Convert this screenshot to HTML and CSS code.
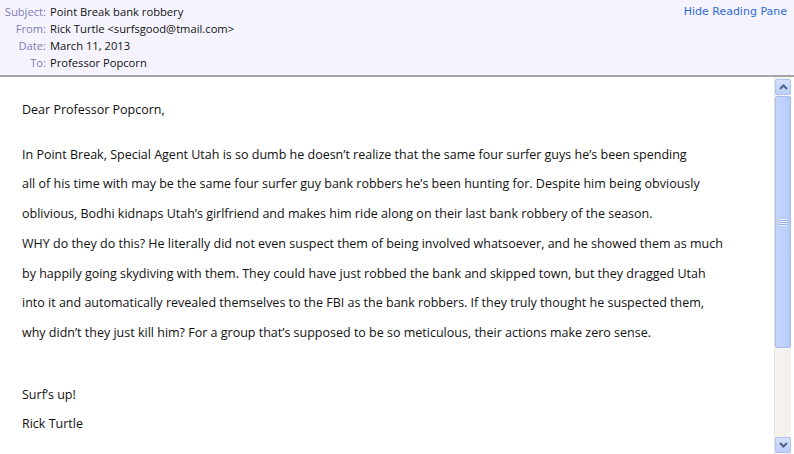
FILE: index.html
```html
<!DOCTYPE html>
<html>
<head>
<meta charset="utf-8">
<link rel="stylesheet" href="styles.css">
</head>
<body>
<div class="pane">
  <header class="head">
    <div class="fields">
      <div class="row"><span class="lbl">Subject:</span><span class="val">Point Break bank robbery</span></div>
      <div class="row"><span class="lbl">From:</span><span class="val">Rick Turtle &lt;surfsgood@tmail.com&gt;</span></div>
      <div class="row"><span class="lbl">Date:</span><span class="val">March 11, 2013</span></div>
      <div class="row"><span class="lbl">To:</span><span class="val">Professor Popcorn</span></div>
    </div>
    <a class="hide">Hide Reading Pane</a>
  </header>
  <div class="bodywrap">
    <div class="msg">
      <p class="greet">Dear Professor Popcorn,</p>
      <p class="main">
        <span class="ln">In Point Break, Special Agent Utah is so dumb he doesn’t realize that the same four surfer guys he’s been spending</span>
        <span class="ln">all of his time with may be the same four surfer guy bank robbers he’s been hunting for. Despite him being obviously</span>
        <span class="ln">oblivious, Bodhi kidnaps Utah’s girlfriend and makes him ride along on their last bank robbery of the season.</span>
        <span class="ln">WHY do they do this? He literally did not even suspect them of being involved whatsoever, and he showed them as much</span>
        <span class="ln">by happily going skydiving with them. They could have just robbed the bank and skipped town, but they dragged Utah</span>
        <span class="ln">into it and automatically revealed themselves to the FBI as the bank robbers. If they truly thought he suspected them,</span>
        <span class="ln">why didn’t they just kill him? For a group that’s supposed to be so meticulous, their actions make zero sense.</span>
      </p>
      <p class="sign">
        <span class="ln">Surf’s up!</span>
        <span class="ln">Rick Turtle</span>
      </p>
    </div>
    <div class="scroll">
      <div class="btn up"><svg width="9" height="6" viewBox="0 0 9 6"><path d="M1 5 L4.5 1.5 L8 5" fill="none" stroke="#4d6185" stroke-width="2"/></svg></div>
      <div class="thumb"><span class="grip"></span></div>
      <div class="track"></div>
      <div class="btn down"><svg width="9" height="6" viewBox="0 0 9 6"><path d="M1 1 L4.5 4.5 L8 1" fill="none" stroke="#4d6185" stroke-width="2"/></svg></div>
    </div>
  </div>
</div>
</body>
</html>
```
FILE: styles.css
```css
html, body {
  margin: 0;
  padding: 0;
  background: #ffffff;
}
.pane {
  width: 794px;
  height: 454px;
  display: flex;
  flex-direction: column;
  font-family: "Open Sans", "Noto Sans", sans-serif;
  overflow: hidden;
}
.head {
  flex: none;
  background: #f5f4fe;
  border-bottom: 2px solid #a4a4a8;
  display: flex;
  justify-content: space-between;
  align-items: flex-start;
  box-sizing: border-box;
  height: 77px;
  padding-top: 3px;
}
.fields {
  display: flex;
  flex-direction: column;
}
.row {
  display: flex;
  height: 17px;
  line-height: 17px;
  font-size: 11.2px;
}
.lbl {
  width: 46px;
  text-align: right;
  color: #7d7bb9;
  margin-right: 4px;
}
.val {
  color: #111111;
}
.hide {
  font-family: "DejaVu Sans", Verdana, sans-serif;
  font-size: 11px;
  color: #2f6bd6;
  margin-right: 7px;
  line-height: 17px;
}
.bodywrap {
  flex: 1;
  display: flex;
  min-height: 0;
}
.msg {
  flex: 1;
  padding: 0 0 0 22px;
  font-size: 12.5px;
  color: #111111;
  line-height: 29.7px;
}
.msg p {
  margin: 0;
}
.greet {
  margin-top: 18px !important;
}
.main {
  margin-top: 15px !important;
}
.sign {
  margin-top: 32px !important;
}
.ln {
  display: block;
  white-space: nowrap;
}
.scroll {
  width: 17px;
  flex: none;
  margin-right: 3px;
  border-left: 1px solid #e6e5e0;
  background: #f4f2ec;
  display: flex;
  flex-direction: column;
  padding-top: 2px;
  box-sizing: border-box;
}
.btn {
  height: 16px;
  flex: none;
  background: linear-gradient(#d4e0fc, #bccff8);
  border: 1px solid #aec3f3;
  border-radius: 2px;
  box-sizing: border-box;
  display: flex;
  align-items: center;
  justify-content: center;
}
.thumb {
  height: 252px;
  flex: none;
  margin-top: 1px;
  background: linear-gradient(90deg, #c6d6fc, #bcd0fb 60%, #b5c9f7);
  border: 1px solid #a7bdf0;
  border-radius: 2px;
  box-sizing: border-box;
  display: flex;
  align-items: center;
  justify-content: center;
}
.grip {
  width: 8px;
  height: 7px;
  background: repeating-linear-gradient(#eef3ff 0 1px, #93acee 1px 2px);
}
.track {
  flex: 1;
}
.down {
  margin-bottom: 1px;
}
```
